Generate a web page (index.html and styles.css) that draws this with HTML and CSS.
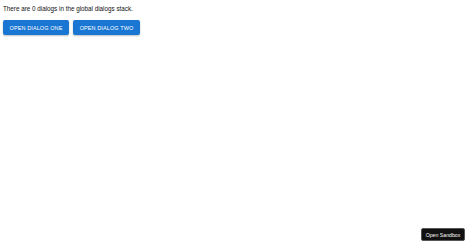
FILE: index.html
```html
<!DOCTYPE html>
<html>
<head>
<meta charset="utf-8">
<link rel="stylesheet" href="styles.css">
</head>
<body>
<div class="page">
  <p class="info">There are 0 dialogs in the global dialogs stack.</p>
  <div class="actions">
    <button class="btn">Open dialog one</button>
    <button class="btn">Open dialog two</button>
  </div>
</div>
<button class="sandbox">Open Sandbox</button>
</body>
</html>
```
FILE: styles.css
```css
html, body {
  margin: 0;
  padding: 0;
  width: 474px;
  height: 248px;
  background: #fff;
  font-family: "Liberation Sans", Arial, sans-serif;
  overflow: hidden;
}
.page {
  padding: 5px 3px;
}
.info {
  margin: 0 0 7px 0;
  font-size: 6.3px;
  line-height: 8px;
  color: #111;
}
.actions {
  display: flex;
  gap: 4px;
}
.btn {
  background: #1976d2;
  color: #fff;
  border: none;
  border-radius: 2px;
  height: 15px;
  width: 66px;
  padding: 0;
  font-family: "Liberation Sans", Arial, sans-serif;
  font-size: 5.5px;
  letter-spacing: 0.1px;
  text-transform: uppercase;
  box-shadow: 0 1px 2px rgba(0,0,0,0.25);
}
.actions .btn:last-child {
  width: 67px;
}
.sandbox {
  position: absolute;
  left: 421px;
  top: 228px;
  width: 44px;
  background: #111;
  color: #fff;
  border: 1px solid #555;
  border-radius: 2px;
  height: 13px;
  padding: 0;
  font-family: "Liberation Sans", Arial, sans-serif;
  font-size: 5.2px;
}
```
